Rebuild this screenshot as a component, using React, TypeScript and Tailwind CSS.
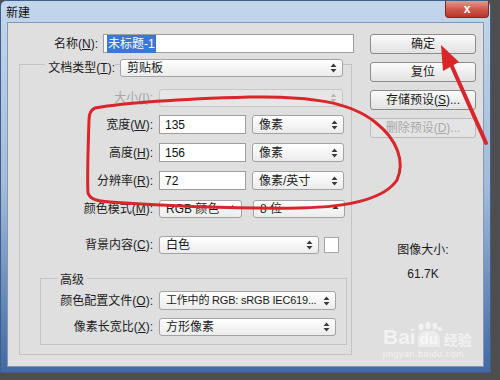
import React from 'react';

const font = { fontFamily: '"Liberation Sans", "Noto Sans CJK SC", sans-serif' };

const Arrows = ({ light }: { light?: boolean }) => (
  <svg width="7" height="10" viewBox="0 0 7 10" className="shrink-0">
    <path d="M3.5 0.5 L6.5 4 L0.5 4 Z M0.5 6 L6.5 6 L3.5 9.5 Z" fill={light ? '#b8b8b8' : '#3a3a3a'} />
  </svg>
);

const Select = ({ text, w, h = 18, disabled, upOnly, small }: { text?: string; w: string; h?: number; disabled?: boolean; upOnly?: boolean; small?: boolean }) => (
  <div
    className={`${w} flex items-center justify-between rounded-[3px] border pl-[6px] pr-[5px] ${small ? 'text-[11px] tracking-[-0.2px]' : 'text-[12px]'} ${
      disabled ? 'border-[#c6c6c6] bg-[#e6e6e6]' : 'border-[#a3a3a3] bg-gradient-to-b from-[#ffffff] to-[#ececec] text-[#1a1a1a]'
    }`}
    style={{ height: h }}
  >
    <span className="overflow-hidden whitespace-nowrap">{text}</span>
    {upOnly ? (
      <svg width="7" height="10" viewBox="0 0 7 10" className="shrink-0"><path d="M3.5 1 L6.5 5 L0.5 5 Z" fill="#3a3a3a" /></svg>
    ) : (
      <Arrows light={disabled} />
    )}
  </div>
);

const Input = ({ value, w }: { value: string; w: string }) => (
  <div className={`${w} flex h-[19px] items-center border border-[#9d9d9d] bg-white pl-[5px] text-[12px] text-[#111]`}>{value}</div>
);

const Label = ({ w, children, muted }: { w: string; children: React.ReactNode; muted?: boolean }) => (
  <div className={`${w} shrink-0 text-right text-[12px] ${muted ? 'text-[#a6a6a6]' : 'text-[#1c1c1c]'}`}>{children}</div>
);

const Button = ({ children, disabled }: { children: React.ReactNode; disabled?: boolean }) => (
  <div
    className={`flex h-[20px] w-[106px] items-center justify-center rounded-[3px] border text-[12px] ${
      disabled
        ? 'border-[#bdbdbd] bg-[#e4e4e4] text-[#a8a8a8]'
        : 'border-[#8c8c8c] bg-gradient-to-b from-[#fbfbfb] to-[#e2e2e2] text-[#1a1a1a]'
    }`}
  >
    {children}
  </div>
);

export default function App() {
  return (
    <div className="relative h-[380px] w-[500px] overflow-hidden bg-[#4e4e4e]" style={font}>
      <div className="flex h-[373px] w-[491px] flex-col rounded-t-[6px] border border-[#3e5f8e] bg-gradient-to-b from-[#c4d6ea] via-[#a3bbd8] to-[#4169a3]">
        {/* title bar */}
        <div className="flex h-[21px] items-start justify-between">
          <span className="pl-[5px] pt-[3px] text-[12px] text-[#111]">新建</span>
          <div className="mr-[1px] flex h-[17px] w-[44px] items-center justify-center rounded-b-[4px] border border-t-0 border-[#7a2a24] bg-gradient-to-b from-[#e09a90] via-[#cf5a4c] to-[#b8352a] text-[12px] font-bold text-white">
            x
          </div>
        </div>

        {/* client area */}
        <div className="mx-[6px] mb-[5px] flex flex-1 border border-[#7f98bc] bg-[#dfdfdf]">
          {/* left column */}
          <div className="flex w-[346px] flex-col">
            <div className="mt-[11px] flex items-center gap-[5px]">
              <Label w="w-[90px]">
                名称(<u>N</u>):
              </Label>
              <div className="flex h-[19px] w-[252px] items-center border border-[#9d9d9d] bg-white pl-[3px] text-[12px]">
                <span className="bg-[#3a78d4] px-[1px] text-white">未标题-1</span>
              </div>
            </div>

            {/* main group box */}
            <div className="ml-[11px] mt-[11px] flex h-[291px] w-[333px] flex-col border border-[#c3c3c3]">
              <div className="-mt-[6px] flex h-[18px] items-center">
                <div className="w-[95px] shrink-0 text-right text-[12px]">
                  <span className="bg-[#dfdfdf] pl-[3px] text-[#1c1c1c]">
                    文档类型(<u>T</u>):
                  </span>
                </div>
                <div className="ml-[5px] bg-[#dfdfdf]">
                  <Select text="剪贴板" w="w-[223px]" />
                </div>
              </div>

              <div className="mt-[12px] flex h-[18px] items-center gap-[6px]">
                <Label w="w-[133px]" muted>
                  大小(<u>I</u>):
                </Label>
                <Select w="w-[184px]" disabled />
              </div>

              <div className="mt-[8px] flex items-center gap-[6px]">
                <Label w="w-[133px]">
                  宽度(<u>W</u>):
                </Label>
                <Input value="135" w="w-[87px]" />
                <Select text="像素" w="w-[92px]" h={19} />
              </div>

              <div className="mt-[9px] flex items-center gap-[6px]">
                <Label w="w-[133px]">
                  高度(<u>H</u>):
                </Label>
                <Input value="156" w="w-[87px]" />
                <Select text="像素" w="w-[92px]" h={19} />
              </div>

              <div className="mt-[9px] flex items-center gap-[6px]">
                <Label w="w-[133px]">
                  分辨率(<u>R</u>):
                </Label>
                <Input value="72" w="w-[87px]" />
                <Select text="像素/英寸" w="w-[92px]" h={19} />
              </div>

              <div className="mt-[10px] flex items-center gap-[6px]">
                <Label w="w-[133px]">
                  颜色模式(<u>M</u>):
                </Label>
                <Select text="RGB 颜色" w="w-[83px]" upOnly />
                <div className="ml-[5px]">
                  <Select text="8 位" w="w-[92px]" upOnly />
                </div>
              </div>

              <div className="mt-[18px] flex items-center gap-[6px]">
                <Label w="w-[133px]">
                  背景内容(<u>C</u>):
                </Label>
                <Select text="白色" w="w-[160px]" />
                <div className="ml-[-1px] h-[16px] w-[15px] border border-[#a5a5a5] bg-white" />
              </div>

              {/* advanced group */}
              <div className="ml-[20px] mt-[24px] flex h-[67px] w-[307px] flex-col border border-[#c3c3c3]">
                <div className="-mt-[8px] ml-[16px] h-[15px] w-fit bg-[#dfdfdf] px-[3px] text-[12px] text-[#1c1c1c]">高级</div>
                <div className="mt-[5px] flex items-center gap-[6px]">
                  <Label w="w-[112px]">
                    颜色配置文件(<u>O</u>):
                  </Label>
                  <Select text="工作中的 RGB: sRGB IEC619..." w="w-[177px]" h={19} small />
                </div>
                <div className="mt-[8px] flex items-center gap-[6px]">
                  <Label w="w-[112px]">
                    像素长宽比(<u>X</u>):
                  </Label>
                  <Select text="方形像素" w="w-[177px]" />
                </div>
              </div>
            </div>
          </div>

          {/* right column */}
          <div className="ml-[16px] flex flex-col">
            <div className="mt-[11px] flex flex-col gap-[8px]">
              <Button>确定</Button>
              <Button>复位</Button>
              <Button>
                存储预设(<u>S</u>)...
              </Button>
              <Button disabled>
                删除预设(<u>D</u>)...
              </Button>
            </div>
            <div className="mt-[103px] flex w-[106px] flex-col items-center text-[12px] text-[#1c1c1c]">
              <span>图像大小:</span>
              <span className="mt-[6px]">61.7K</span>
            </div>
          </div>
        </div>
      </div>

      {/* watermark */}
      <div className="pointer-events-none absolute left-[383px] top-[322px] flex flex-col text-white/60">
        <div className="flex items-end">
          <span className="text-[21px] font-bold leading-none">Bai</span>
          <div className="flex flex-col items-center">
            <svg width="26" height="9" viewBox="0 0 26 9">
              <g fill="rgba(255,255,255,0.6)">
                <ellipse cx="5" cy="5" rx="2.5" ry="3.5" />
                <ellipse cx="12" cy="3.5" rx="2.5" ry="3.5" />
                <ellipse cx="19" cy="4" rx="2.5" ry="3.5" />
                <ellipse cx="24" cy="7" rx="2" ry="2" />
              </g>
            </svg>
            <span className="rounded-t-[8px] bg-white/40 px-[2px] text-[15px] font-bold leading-[16px]">du</span>
          </div>
          <span className="ml-[2px] text-[14px] font-bold leading-none">经验</span>
        </div>
        <span className="mt-[3px] text-[9px] leading-none tracking-[0.5px]">jingyan.baidu.com</span>
      </div>

      {/* red annotation */}
      <svg className="pointer-events-none absolute left-0 top-0" width="500" height="380" viewBox="0 0 500 380">
        <path
          d="M95 108 C 90 110, 89 114, 89 120 C 88 150, 87 180, 88 193 C 90 199, 96 201, 110 202 C 170 206, 240 209, 300 208 C 350 207, 385 198, 397 180 C 405 162, 398 140, 375 122 C 350 102, 310 96, 250 97 C 180 99, 130 102, 95 108 Z"
          fill="none"
          stroke="#d8262a"
          strokeWidth="3"
          strokeLinejoin="round"
        />
        <path d="M486 143 L450 62" stroke="#d8262a" strokeWidth="4" strokeLinecap="round" />
        <path d="M441 45 L459 62 L443 71 Z" fill="#d8262a" />
      </svg>
    </div>
  );
}
